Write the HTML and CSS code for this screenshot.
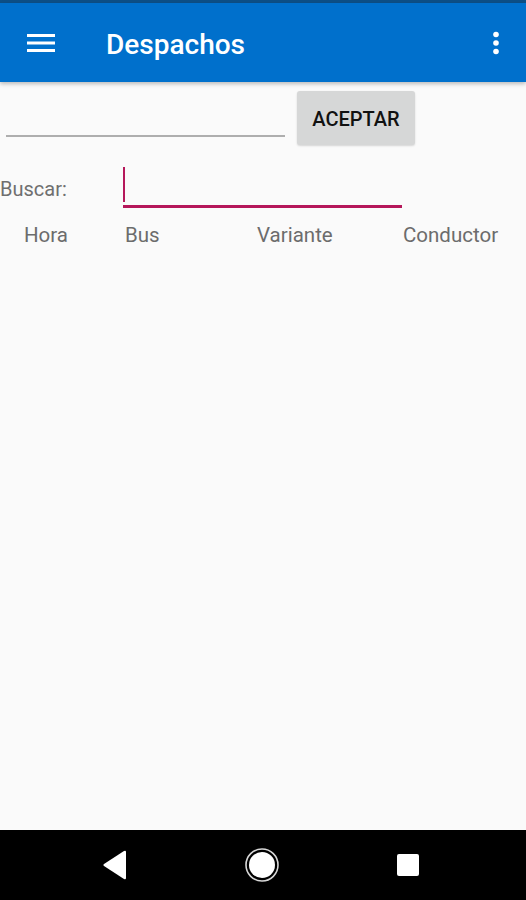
FILE: index.html
```html
<!DOCTYPE html>
<html lang="es">
<head>
  <meta charset="UTF-8"/>
  <meta name="viewport" content="width=device-width, initial-scale=1.0"/>
  <title>Despachos</title>
  <link rel="stylesheet" href="styles.css">
</head>
<body>
  <div class="screen">
    <div class="status"></div>
    <header class="toolbar">
      <svg class="menu" width="28" height="20" viewBox="0 0 28 20">
        <rect x="0" y="1" width="28" height="3" fill="#fff"/>
        <rect x="0" y="8.5" width="28" height="3" fill="#fff"/>
        <rect x="0" y="16" width="28" height="3" fill="#fff"/>
      </svg>
      <h1>Despachos</h1>
      <svg class="more" width="8" height="24" viewBox="0 0 8 24">
        <circle cx="4" cy="3.5" r="2.8" fill="#fff"/>
        <circle cx="4" cy="12" r="2.8" fill="#fff"/>
        <circle cx="4" cy="20.5" r="2.8" fill="#fff"/>
      </svg>
    </header>

    <main class="content">
      <div class="row-top">
        <div class="field"></div>
        <button class="btn">ACEPTAR</button>
      </div>

      <div class="row-search">
        <label>Buscar:</label>
        <div class="search-input"><span class="caret"></span></div>
      </div>

      <div class="headers">
        <span class="h-hora">Hora</span>
        <span class="h-bus">Bus</span>
        <span class="h-var">Variante</span>
        <span class="h-cond">Conductor</span>
      </div>
    </main>

    <nav class="navbar">
      <svg width="26" height="30" viewBox="0 0 26 30">
        <path d="M24 2 L24 28 Q24 30 22 29 L2 16 Q0.5 15 2 14 L22 1 Q24 0 24 2 Z" fill="#fff"/>
      </svg>
      <svg width="36" height="36" viewBox="0 0 36 36">
        <circle cx="18" cy="18" r="16" fill="none" stroke="#d8d8d8" stroke-width="1.6"/>
        <circle cx="18" cy="18" r="13" fill="#fff"/>
      </svg>
      <svg width="24" height="24" viewBox="0 0 24 24">
        <rect x="1" y="1" width="22" height="22" rx="2" fill="#fff"/>
      </svg>
    </nav>
  </div>
</body>
</html>
```

FILE: styles.css
```css
body {
  margin: 0;
  font-family: Roboto, "Liberation Sans", sans-serif;
  background: #fafafa;
}
.screen {
  width: 526px;
  height: 900px;
  display: flex;
  flex-direction: column;
  overflow: hidden;
}
.status {
  height: 3px;
  background: #0d4f86;
}
.toolbar {
  height: 79px;
  background: #0070cc;
  display: flex;
  align-items: center;
  padding: 0 27px;
  box-shadow: 0 2px 4px rgba(0,0,0,0.25);
  position: relative;
  z-index: 1;
}
.toolbar h1 {
  flex: 1;
  margin: 0 0 0 51px;
  color: #fff;
  font-size: 28px;
  font-weight: 500;
  padding-top: 4px;
}
.more { margin-right: -1px; }
.content {
  flex: 1;
}
.row-top {
  display: flex;
  align-items: flex-start;
  padding: 9px 0 0 6px;
}
.field {
  width: 279px;
  height: 44px;
  border-bottom: 2px solid #aeaeae;
}
.btn {
  margin-left: 12px;
  width: 118px;
  height: 54px;
  padding-top: 2px;
  border: none;
  border-radius: 3px;
  background: #d6d7d7;
  color: #111;
  font-family: Roboto, "Liberation Sans", sans-serif;
  font-size: 20px;
  font-weight: 500;
  box-shadow: 0 1px 2px rgba(0,0,0,0.15);
}
.row-search {
  display: flex;
  align-items: flex-start;
  margin-top: 22px;
}
.row-search label {
  width: 123px;
  padding-top: 10px;
  color: #6f6f6f;
  font-size: 20px;
}
.search-input {
  width: 279px;
  height: 38px;
  border-bottom: 3px solid #b5175a;
  position: relative;
}
.caret {
  position: absolute;
  left: 0;
  top: 0;
  width: 2px;
  height: 35px;
  background: #b5175a;
}
.headers {
  display: flex;
  margin-top: 15px;
  color: #6c6c6c;
  font-size: 20.5px;
}
.h-hora { margin-left: 24px; width: 101px; }
.h-bus { width: 132px; }
.h-var { width: 146px; }
.navbar {
  height: 70px;
  background: #000;
  display: flex;
  align-items: center;
  justify-content: space-between;
  padding: 0 106px 0 102px;
}
```
